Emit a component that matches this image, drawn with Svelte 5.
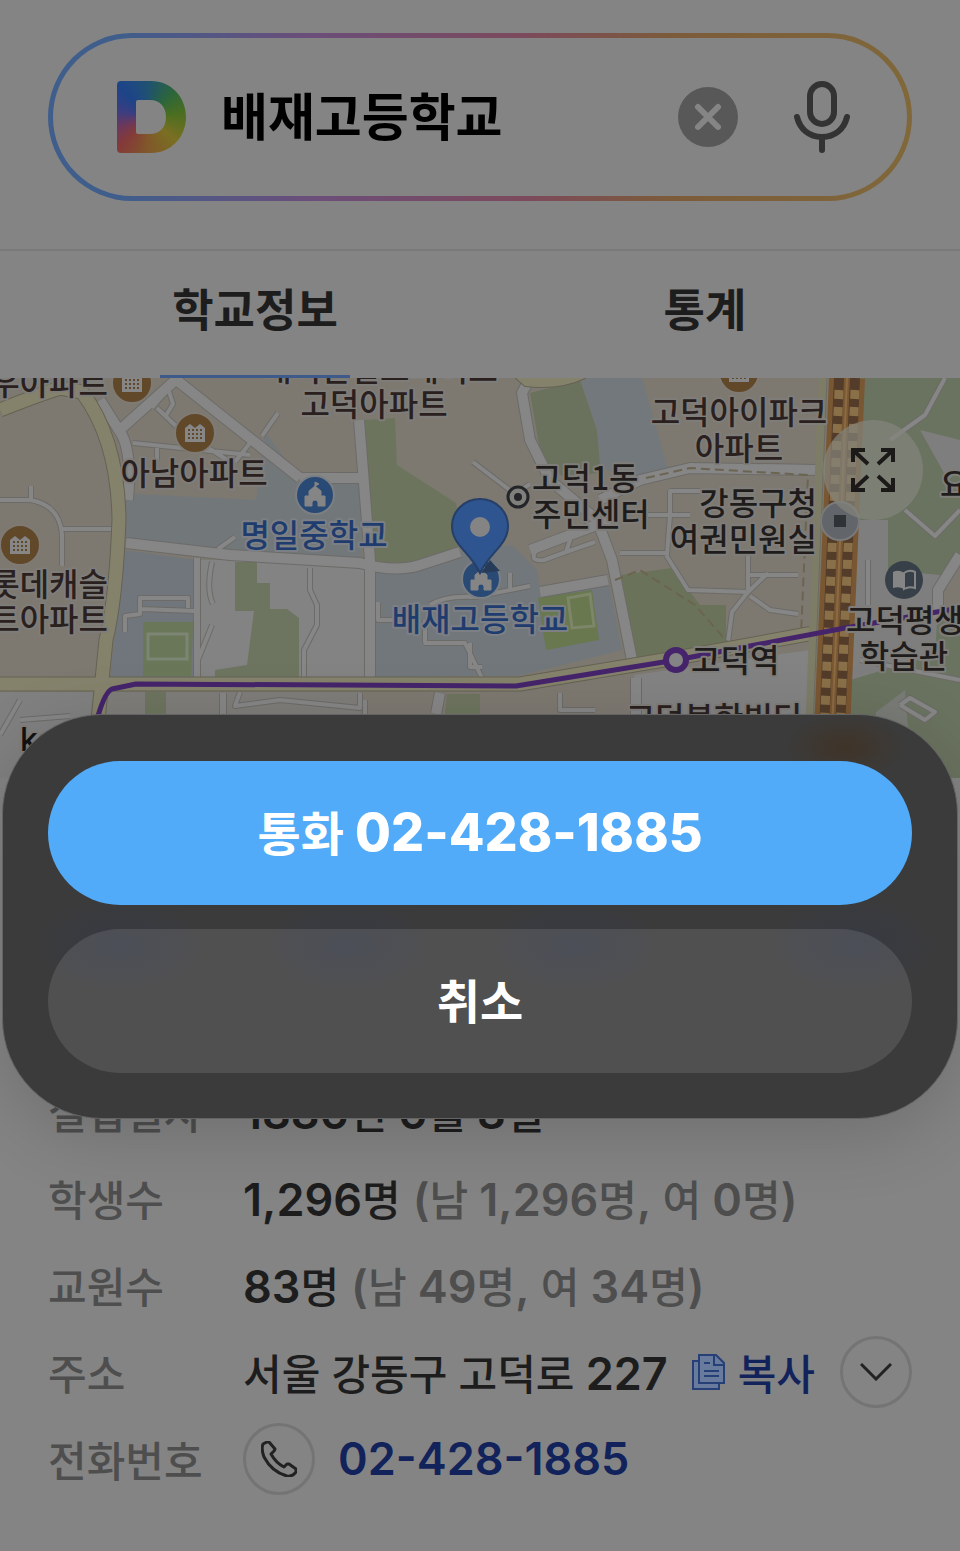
<script>
  let query = "배재고등학교";
  let activeTab = "info";
  let sheetOpen = true;

  const phone = "02-428-1885";

  const tabs = [
    { id: "info", label: "학교정보" },
    { id: "stats", label: "통계" },
  ];

  const rows = [
    { label: "설립일자", value: "1886년 6월 8일" },
    { label: "학생수", value: "1,296명", detail: "(남 1,296명, 여 0명)" },
    { label: "교원수", value: "83명", detail: "(남 49명, 여 34명)" },
  ];

  // anchor: start | middle | end, tone picks the label colour
  const places = [
    { x: 108, y: 395, text: "우아파트", anchor: "end", tone: "home" },
    { x: 380, y: 381, text: "래미안힐스테이트", anchor: "middle", tone: "home" },
    { x: 374, y: 416, text: "고덕아파트", anchor: "middle", tone: "home" },
    { x: 194, y: 485, text: "아남아파트", anchor: "middle", tone: "home" },
    { x: 314, y: 547, text: "명일중학교", anchor: "middle", tone: "school" },
    { x: 108, y: 596, text: "롯데캐슬", anchor: "end", tone: "home" },
    { x: 108, y: 631, text: "트아파트", anchor: "end", tone: "home" },
    { x: 480, y: 631, text: "배재고등학교", anchor: "middle", tone: "school" },
    { x: 532, y: 490, text: "고덕1동", anchor: "start", tone: "public" },
    { x: 532, y: 526, text: "주민센터", anchor: "start", tone: "public" },
    { x: 739, y: 424, text: "고덕아이파크", anchor: "middle", tone: "home" },
    { x: 739, y: 460, text: "아파트", anchor: "middle", tone: "home" },
    { x: 817, y: 515, text: "강동구청", anchor: "end", tone: "public" },
    { x: 817, y: 551, text: "여권민원실", anchor: "end", tone: "public" },
    { x: 691, y: 672, text: "고덕역", anchor: "start", tone: "public" },
    { x: 846, y: 632, text: "고덕평생", anchor: "start", tone: "public" },
    { x: 904, y: 668, text: "학습관", anchor: "middle", tone: "public" },
    { x: 940, y: 496, text: "요", anchor: "start", tone: "public" },
    { x: 714, y: 730, text: "고덕북한빌딩", anchor: "middle", tone: "home" },
  ];

  const apartments = [
    [132, 383],
    [195, 433],
    [20, 545],
    [739, 373],
  ];

  // separates Hangul from figures and punctuation
  const split = (text) => text.split(/([^가-힣\s]+)/);
</script>

<svelte:head>
  <title>배재고등학교</title>
</svelte:head>

{#snippet mixed(text)}
  {#each split(text) as part, i}{#if i % 2}<span class="num">{part}</span>{:else}{part}{/if}{/each}
{/snippet}

<div class="page">
  <header>
    <form class="search" on:submit|preventDefault>
      <span class="logo"></span>
      <input type="text" aria-label="검색어" bind:value={query} />
      <button type="button" class="icon-button clear" aria-label="지우기" on:click={() => (query = "")}>
        <svg viewBox="0 0 60 60" width="60" height="60">
          <circle cx="30" cy="30" r="30" fill="#585858" />
          <path d="M20 20 40 40M40 20 20 40" stroke="#858585" stroke-width="6" stroke-linecap="round" />
        </svg>
      </button>
      <button type="button" class="icon-button" aria-label="음성 검색">
        <svg viewBox="0 0 56 72" width="56" height="72" fill="none" stroke="#333" stroke-width="6" stroke-linecap="round">
          <rect x="16" y="3" width="24" height="40" rx="12" />
          <path d="M3 36C6 48 15 56 28 56S50 48 53 36M28 57V69" />
        </svg>
      </button>
    </form>
  </header>

  <nav>
    {#each tabs as tab}
      <button type="button" class="tab" class:active={activeTab === tab.id} on:click={() => (activeTab = tab.id)}>
        <span>{tab.label}</span>
      </button>
    {/each}
  </nav>

  <div class="map">
    <svg class="tiles" viewBox="0 378 960 400" preserveAspectRatio="xMidYMid slice">
      <rect y="378" width="960" height="400" fill="#7d7971" />

      <!-- land -->
      <path d="M0 692H360V778H0Z" fill="#7f7d79" />
      <path d="M0 692H98V778H0Z" fill="#808080" />
      <path d="M126 500 134 440 262 455 265 432 300 478H362V562L126 546Z" fill="#72777a" />
      <path d="M126 440 262 455 256 500 134 494Z" fill="#7d7971" />
      <path d="M124 550 195 560V678H110Z" fill="#70767b" />
      <path d="M199 560H370V678H197Z" fill="#838383" />
      <path d="M235 562H257V583H270V609H287L299 618V678H215V670L247 665 254 611H235Z" fill="#6d745f" />
      <path d="M143 622H193L191 676H143Z" fill="#6a7758" />
      <path d="M364 420 395 418 397 465 456 503 462 545 412 567 372 564Z" fill="#6d745e" />
      <path d="M373 572 412 570 465 550 512 545 537 570 540 592 608 578 622 650 518 676 373 677Z" fill="#71777b" />
      <path d="M538 598 592 590 599 640 546 650Z" fill="#69784f" />
      <path d="M530 393 580 380 597 430 602 472 565 478 542 462Z" fill="#6a725d" />
      <path d="M580 378H642L668 470 628 482 600 465 597 430Z" fill="#72787c" />
      <path d="M621 575 672 568 700 605H726V643L634 658Z" fill="#6a7359" />
      <path d="M634 675 810 650V778H634Z" fill="#838383" />
      <path d="M516 692 634 678V778H516Z" fill="#7d7971" />
      <path d="M145 692H166V716H145ZM447 694H480V716H445Z" fill="#6d745e" />
      <path d="M857 378H960V778H840Z" fill="#6a735f" />
      <path d="M855 520H888V570L940 575 935 655 850 680Z" fill="#7e7e7e" />
      <path d="M920 430 960 440V470L948 480Z" fill="#7e7e7e" />
      <path d="M940 600 960 560V610H940Z" fill="#7d7971" />
      <path d="M876 712 905 690 912 778H870Z" fill="#787b76" />

      <!-- minor roads, casing then fill -->
      {#each [{ c: "#6c6b68", w: 2 }, { c: "#868686", w: 0 }] as pass}
        <g fill="none" stroke={pass.c} stroke-linejoin="round">
          <g stroke-width={4 + pass.w}>
            <path d="M0 500H30Q60 505 62 535V566M31 500V486M62 529H112M133 443 250 455M157 448V460M157 408 178 428 230 462M165 417 173 404 167 385M235 462 250 443M262 436 278 413M152 408 176 380M125 632V616L140 614V598H188V608M140 609 195 611M218 549 235 537M212 562Q206 590 213 604M212 625 198 660M310 568V590L317 605V625L304 650V678M240 692 235 706 280 700 360 708V693" />
            <path d="M473 462 515 494 530 484M535 552Q530 562 544 560L566 552 570 540Q555 535 535 552ZM566 552 595 542M378 602V620H395M425 643V620M424 643H465L482 678M470 643V667H482M510 590V573M430 605Q445 595 475 597L530 586" />
            <path d="M666 555 688 590 748 592 768 573M670 490V515L667 555M620 553H667M748 555V592M750 575H798M748 592 732 612 728 642M750 596 770 610 798 614M670 491H700M648 515H690M560 693V710H595M0 735 20 700M20 720 70 716M365 700 365 715M868 560V605M860 660 960 680M905 510 935 536 960 510M945 378 925 415 890 440M900 705 910 698 935 712 925 720 900 705" />
          </g>
          <g stroke-width={10 + pass.w}>
            <path d="M126 543 230 555 360 563Q395 573 420 565L460 552M174 378 300 478M300 478H360M359 420 370 560V680M530 550 610 520M440 693 436 714M938 620V590L960 555M636 678V714" />
            <path d="M100 400 122 435Q132 455 128 500M122 428 180 376M530 378 522 393 530 440 550 480 597 520 612 560 632 660M600 500 640 480 690 468 818 470M540 592 608 580" />
          </g>
          <path d="M197 558V678M223 693V714" stroke-width={6 + pass.w} />
        </g>
      {/each}

      <path d="M148 634H187V659H148Z" fill="none" stroke="#7d8574" stroke-width="3" />
      <path d="M568 598 590 594 594 626 572 628Z" fill="none" stroke="#7d8669" stroke-width="3" />
      <path d="M646 478 690 468 808 475 801 635 730 645 695 605 640 570 615 580" fill="none" stroke="#6b6450" stroke-width="2" stroke-dasharray="9 5" />

      <!-- main roads -->
      {#each [{ c: "#656253", w: 2 }, { c: "#85826c", w: 0 }] as pass}
        <g fill="none" stroke={pass.c} stroke-linejoin="round">
          <path d="M0 410Q35 396 60 388L82 392Q118 440 119 520 116 600 106 640L98 720" stroke-width={13 + pass.w} />
          <path d="M0 684H108M100 684H520L676 658 830 630" stroke-width={13 + pass.w} />
          <path d="M516 378H585Q560 390 525 386Z" stroke-width={pass.w} fill="#85826c" />
        </g>
      {/each}
      <path d="M823 378 808 778" stroke="#7d7c67" stroke-width="9" />
      <path d="M827 378 811 778" stroke="#6b6b64" stroke-width="1" />

      <!-- railway -->
      <path d="M847 378 830 778" stroke="#7a5733" stroke-width="36" />
      <path d="M839 378 822 778" stroke="#533c29" stroke-width="10" />
      <path d="M855 378 838 778" stroke="#533c29" stroke-width="10" />
      <path d="M839 390 822 778M855 390 838 778" stroke="#8a7048" stroke-width="9" stroke-dasharray="9 8" />
      <path d="M847 378 830 778" stroke="#8a6b42" stroke-width="2" />

      <!-- subway line 5 -->
      <path d="M98 716Q105 692 112 689L136 684 516 686 676 660 845 628 960 608" fill="none" stroke="#45246b" stroke-width="5" stroke-linejoin="round" />
      <circle cx="676" cy="660" r="10" fill="#848484" stroke="#45246b" stroke-width="6" />

      {#each apartments as [x, y]}
        <g transform="translate({x} {y})">
          <circle r="20" fill="#614829" stroke="#7f7b74" stroke-width="2" />
          <path d="M-10 9V-5L-5-9 0-5 5-9 10-5V9Z" fill="#868686" />
          <path d="M-7-3H8M-7 1H8M-7 5H8" stroke="#614829" stroke-width="2" stroke-dasharray="2 2" />
        </g>
      {/each}

      {#each [[315, 495], [481, 579]] as [x, y]}
        <g transform="translate({x} {y})">
          <circle r="19" fill="#2a4a76" stroke="#7b7f83" stroke-width="2" />
          <path d="M-10 11V1H-6V-4L0-9 6-4V1H10V11H3V7Q0 3-3 7V11ZM0-8V-13L4-11 0-9Z" fill="#858585" stroke="#858585" />
        </g>
      {/each}

      <circle cx="840" cy="521" r="19" fill="#62656a" stroke="#7a7a7a" stroke-width="2" />
      <rect x="834" y="515" width="12" height="12" fill="#2f3336" />
      <circle cx="904" cy="580" r="19" fill="#374048" />
      <path d="M893 572Q899 569 904 573V589Q899 586 893 588Z" fill="#858585" />
      <path d="M904 573Q909 569 915 572V588Q909 586 904 589Z" fill="none" stroke="#858585" stroke-width="2" />
      <circle cx="518" cy="497" r="10" fill="#7f7f7c" stroke="#232528" stroke-width="3" />
      <circle cx="518" cy="497" r="4" fill="#232528" />
      <path d="M481 573 490 560 500 571Z" fill="#263b57" />
      <path d="M480 573C470 552 452 545 452 526A28 27 0 0 1 508 526C508 545 490 552 480 573Z" fill="#2e5590" stroke="#253f68" stroke-width="2" />
      <circle cx="480" cy="527" r="10" fill="#848484" />

      {#each places as place}
        <text x={place.x} y={place.y} text-anchor={place.anchor} class={place.tone}>{place.text}</text>
      {/each}
      <text x="20" y="751" class="brand">kakao</text>
    </svg>
    <button type="button" class="expand" aria-label="지도 크게 보기">
      <svg viewBox="0 0 44 44" width="44" height="44" fill="none" stroke="#1c1a19" stroke-width="4">
        <path d="M2 14V2H14M3 3 17 16M30 2H42V14M41 3 27 16M2 30V42H14M3 41 17 28M42 30V42H30M41 41 27 28" />
      </svg>
    </button>
  </div>

  <dl>
    {#each rows as row}
      <div class="row">
        <dt>{row.label}</dt>
        <dd>
          <span>{@render mixed(row.value)}</span>
          {#if row.detail}<span class="detail">{@render mixed(row.detail)}</span>{/if}
        </dd>
      </div>
    {/each}
    <div class="row">
      <dt>주소</dt>
      <dd>
        <span>{@render mixed("서울 강동구 고덕로 227")}</span>
        <button type="button" class="copy">
          <svg viewBox="0 0 34 36" width="34" height="36" fill="#687b9c" stroke="#263f76" stroke-width="2">
            <path d="M7 7H1V35H27V29" />
            <path d="M7 1H24L32 9V29H7Z" />
            <path d="M22 1V11H32M12 9H18M12 17H27M12 22H27" />
          </svg>
          복사
        </button>
        <button type="button" class="round more" aria-label="주소 더보기">
          <svg viewBox="0 0 32 18" width="32" height="18" fill="none" stroke="#222" stroke-width="3">
            <path d="M1 1 16 16 31 1" />
          </svg>
        </button>
      </dd>
    </div>
    <div class="row">
      <dt>전화번호</dt>
      <dd>
        <button type="button" class="round" aria-label="전화 걸기" on:click={() => (sheetOpen = true)}>
          <svg viewBox="0 0 36 36" width="36" height="36" fill="none" stroke="#222" stroke-width="3" stroke-linejoin="round">
            <path d="M2 3 6 1 8 1 14 8 13 10 10 13Q15 22 23 26L26 23 28 23 35 28 35 31Q31 36 26 35 11 31 3 16 0 8 2 3Z" />
          </svg>
        </button>
        <a class="num" href="tel:{phone}">{phone}</a>
      </dd>
    </div>
  </dl>

  {#if sheetOpen}
    <div class="sheet" role="dialog" aria-label="통화">
      <button type="button" class="action call">통화 <span>{phone}</span></button>
      <button type="button" class="action" on:click={() => (sheetOpen = false)}>취소</button>
    </div>
  {/if}
</div>

<style>
  :global(body) {
    margin: 0;
    background: #848484;
  }

  .page {
    position: relative;
    overflow: hidden;
    background: #848484;
    color: #1d1d1d;
    font-family: "Inter", "Noto Sans CJK KR", sans-serif;
    font-size: 42px;
    font-weight: 500;
  }

  button,
  input {
    margin: 0;
    border: 0;
    padding: 0;
    background: none;
    color: inherit;
    font: inherit;
  }

  button {
    cursor: pointer;
  }

  svg {
    display: block;
  }

  .num {
    font-size: 45px;
    font-weight: 600;
  }

  /* Search */
  header {
    padding: 33px 48px 48px;
    border-bottom: 2px solid #7a7a7a;
  }

  .search {
    display: flex;
    align-items: center;
    box-sizing: border-box;
    height: 168px;
    padding: 0 57px 0 64px;
    border: 5px solid transparent;
    border-radius: 84px;
    background:
      linear-gradient(#848484, #848484) padding-box,
      linear-gradient(90deg, #3f5e8c 8%, #6b4e7a 30%, #7c4a5c 55%, #7c5b3a 72%, #80683a) border-box;
  }

  .logo {
    flex: none;
    width: 69px;
    height: 72px;
    margin-right: 35px;
    background: conic-gradient(from 0deg at 45% 50%, #1f5270, #2b653c 12%, #4a6e20 23%, #7a6f22 36%, #80582a 50%, #843a38 62%, #6f3858 69%, #3d3d80 78%, #1d4488 88%, #1f4a80 94%, #1f5270);
    clip-path: path(evenodd, "M4 0H34C54 0 69 16 69 36S54 72 34 72H4Q0 72 0 68V4Q0 0 4 0ZM21 19Q19 19 19 21V51Q19 53 21 53H33C43 53 49 46 49 36S43 19 33 19Z");
  }

  .search input {
    flex: 1;
    min-width: 0;
    padding-bottom: 6px;
    color: #000;
    font-size: 51px;
    font-weight: 700;
    outline: none;
  }

  .clear {
    margin-right: 56px;
  }

  /* Tabs */
  nav {
    display: flex;
    height: 127px;
    padding: 0 30px;
  }

  .tab {
    flex: 1;
    font-size: 45px;
    font-weight: 700;
  }

  .tab span {
    display: inline-flex;
    align-items: center;
    box-sizing: border-box;
    height: 127px;
    padding: 0 12px 12px;
    border-bottom: 3px solid transparent;
  }

  .active span {
    border-color: #3d5a8a;
  }

  /* Map */
  .map {
    position: relative;
    height: 400px;
  }

  .tiles {
    width: 100%;
    height: 100%;
  }

  .tiles text {
    fill: #201c1b;
    stroke: #7f7d7a;
    stroke-width: 4px;
    stroke-linejoin: round;
    paint-order: stroke;
    font-family: "Noto Sans CJK KR", sans-serif;
    font-size: 32px;
  }

  .tiles .home {
    fill: #2a201e;
  }

  .tiles .school {
    fill: #1f3c6e;
    stroke: #7c8085;
  }

  .tiles .brand {
    fill: #111;
    font-family: "Inter", sans-serif;
  }

  .expand {
    position: absolute;
    top: 42px;
    right: 37px;
    display: grid;
    place-items: center;
    width: 100px;
    height: 100px;
    border-radius: 50%;
    background: rgba(132, 132, 126, 0.7);
  }

  /* Info */
  dl {
    margin: 0;
    padding: 289px 48px 48px;
  }

  .row {
    display: flex;
    align-items: center;
    height: 87px;
  }

  dt {
    flex: none;
    width: 195px;
    color: #4e4e4e;
  }

  dd {
    display: flex;
    flex: 1;
    align-items: center;
    margin: 0;
    white-space: nowrap;
  }

  .detail {
    margin-left: 12px;
    color: #4e4e4e;
  }

  .copy {
    display: flex;
    align-items: center;
    gap: 12px;
    margin-left: 24px;
    color: #12235c;
  }

  .round {
    display: grid;
    place-items: center;
    flex: none;
    box-sizing: border-box;
    width: 72px;
    height: 72px;
    border: 3px solid #747474;
    border-radius: 50%;
  }

  .more {
    margin-left: auto;
  }

  a {
    margin-left: 23px;
    color: #12235c;
    text-decoration: none;
  }

  /* Call sheet */
  .sheet {
    position: absolute;
    top: 714px;
    left: 2px;
    right: 2px;
    display: flex;
    flex-direction: column;
    gap: 24px;
    padding: 46px 45px 45px;
    border: 1px solid #646464;
    border-radius: 100px;
    background:
      radial-gradient(60px 34px at 842px 32px, rgba(70, 40, 10, 0.4), transparent),
      radial-gradient(90px 50px at 115px 230px, rgba(50, 56, 76, 0.5), transparent),
      radial-gradient(90px 50px at 345px 230px, rgba(50, 56, 76, 0.5), transparent),
      radial-gradient(90px 50px at 570px 230px, rgba(50, 56, 76, 0.5), transparent),
      radial-gradient(90px 50px at 850px 230px, rgba(50, 56, 76, 0.5), transparent),
      #3b3b3b;
    box-shadow: 0 16px 70px rgba(0, 0, 0, 0.16);
  }

  .action {
    height: 144px;
    padding-bottom: 6px;
    border-radius: 72px;
    background: rgba(255, 255, 255, 0.11);
    color: #fff;
    font-size: 47px;
    font-weight: 700;
  }

  .action span {
    font-size: 52px;
    font-weight: 800;
  }

  .call {
    background: #52abf9;
  }
</style>
